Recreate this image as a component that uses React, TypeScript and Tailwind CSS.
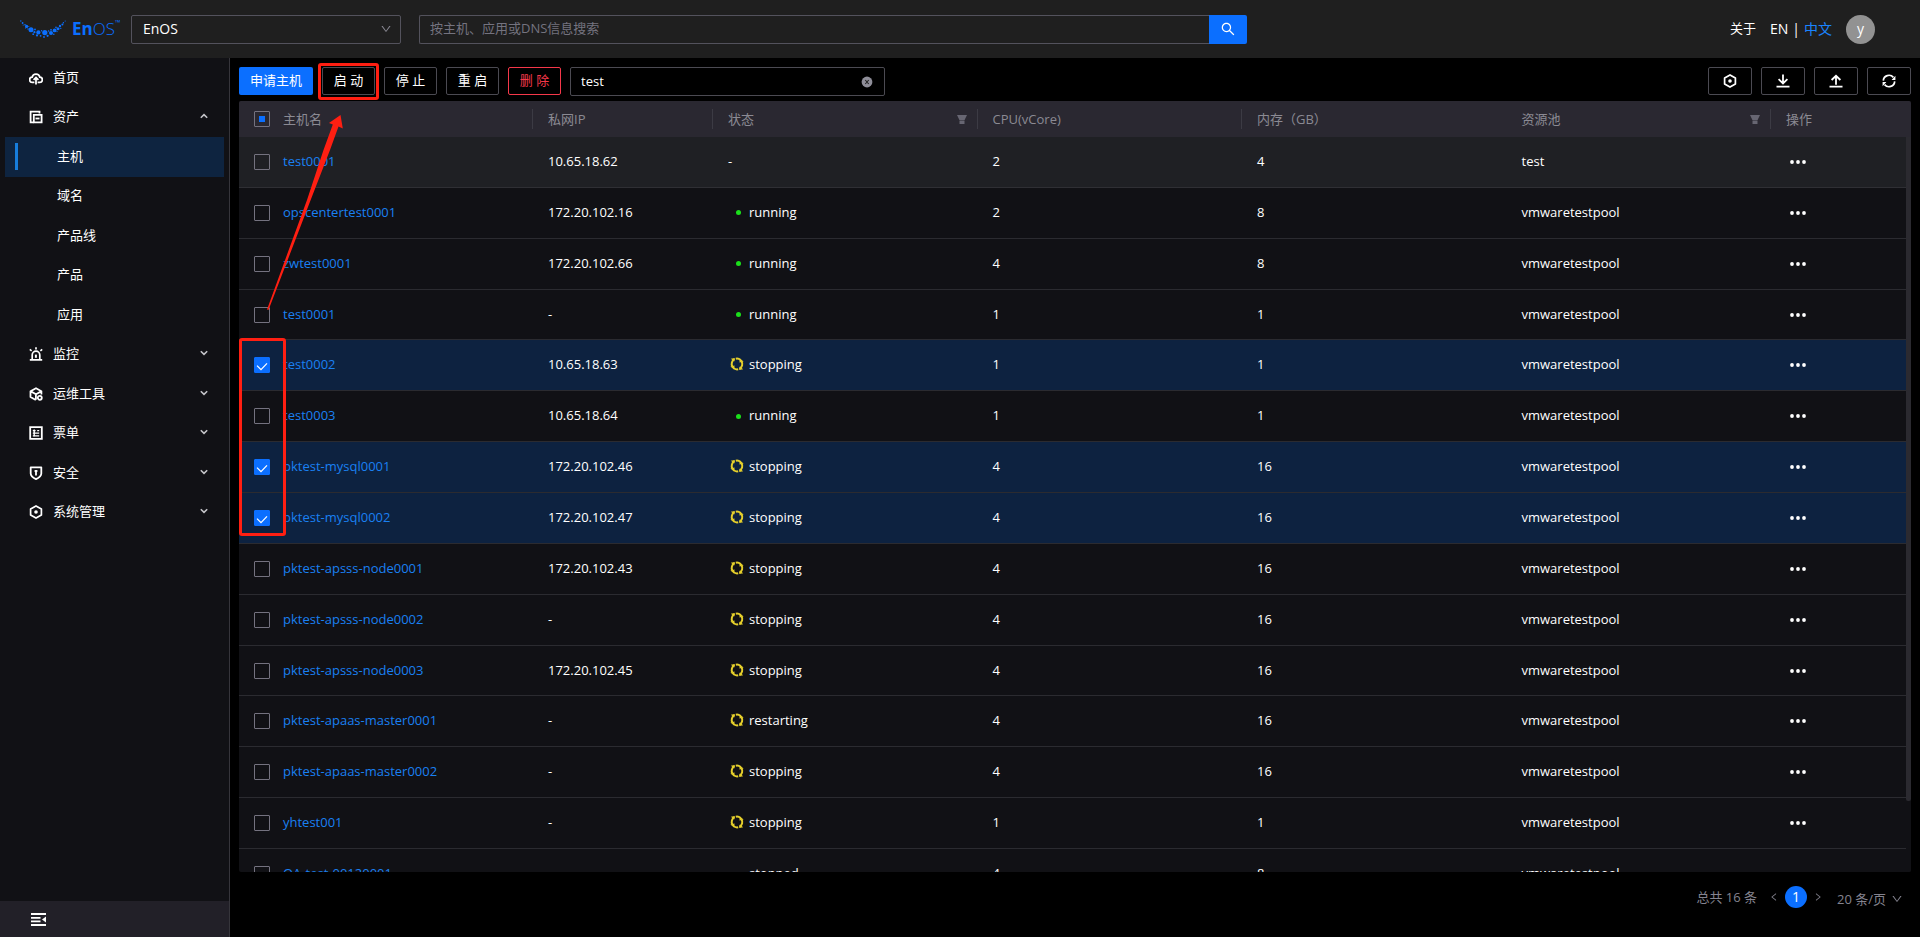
import React, { useState } from "react";
import { AiOutlineDown, AiOutlineLeft, AiOutlineRight, AiOutlineSearch } from "react-icons/ai";

type Host = {
  name: string;
  ip: string;
  status: string;
  cpu: number;
  memory: number;
  pool: string;
};

const HOSTS: Host[] = [
  { name: "test0001", ip: "10.65.18.62", status: "-", cpu: 2, memory: 4, pool: "test" },
  { name: "opscentertest0001", ip: "172.20.102.16", status: "running", cpu: 2, memory: 8, pool: "vmwaretestpool" },
  { name: "zwtest0001", ip: "172.20.102.66", status: "running", cpu: 4, memory: 8, pool: "vmwaretestpool" },
  { name: "test0001", ip: "-", status: "running", cpu: 1, memory: 1, pool: "vmwaretestpool" },
  { name: "test0002", ip: "10.65.18.63", status: "stopping", cpu: 1, memory: 1, pool: "vmwaretestpool" },
  { name: "test0003", ip: "10.65.18.64", status: "running", cpu: 1, memory: 1, pool: "vmwaretestpool" },
  { name: "pktest-mysql0001", ip: "172.20.102.46", status: "stopping", cpu: 4, memory: 16, pool: "vmwaretestpool" },
  { name: "pktest-mysql0002", ip: "172.20.102.47", status: "stopping", cpu: 4, memory: 16, pool: "vmwaretestpool" },
  { name: "pktest-apsss-node0001", ip: "172.20.102.43", status: "stopping", cpu: 4, memory: 16, pool: "vmwaretestpool" },
  { name: "pktest-apsss-node0002", ip: "-", status: "stopping", cpu: 4, memory: 16, pool: "vmwaretestpool" },
  { name: "pktest-apsss-node0003", ip: "172.20.102.45", status: "stopping", cpu: 4, memory: 16, pool: "vmwaretestpool" },
  { name: "pktest-apaas-master0001", ip: "-", status: "restarting", cpu: 4, memory: 16, pool: "vmwaretestpool" },
  { name: "pktest-apaas-master0002", ip: "-", status: "stopping", cpu: 4, memory: 16, pool: "vmwaretestpool" },
  { name: "yhtest001", ip: "-", status: "stopping", cpu: 1, memory: 1, pool: "vmwaretestpool" },
  { name: "QA-test-00120001", ip: "-", status: "stopped", cpu: 4, memory: 8, pool: "vmwaretestpool" },
];

const HexIcon = () => (
  <svg viewBox="0 0 14 14" className="size-3.5" fill="none" stroke="currentColor" strokeWidth="1.7">
    <path d="M7 .9 12.4 3.9v6.2L7 13.1 1.6 10.1V3.9Z" strokeLinejoin="round" />
    <circle cx="7" cy="7" r="1.8" fill="currentColor" stroke="none" />
  </svg>
);

const HomeIcon = () => (
  <svg viewBox="0 0 14 14" className="size-3.5" fill="none" stroke="currentColor" strokeWidth="1.8">
    <path d="M5.4 11.4H3.4a2.6 2.6 0 0 1-.3-5.2 4 4 0 0 1 7.8 0 2.6 2.6 0 0 1-.3 5.2H8.6M7 13.4V6.6M4.6 8.8 7 6.4l2.4 2.4" />
  </svg>
);

const AssetIcon = () => (
  <svg viewBox="0 0 14 14" className="size-3.5" fill="none" stroke="currentColor" strokeWidth="1.8">
    <path d="M10.5 3.5V1.6H1.6v10.8h3" />
    <path d="M4.8 4.8h7.8v7.6H4.8Z" />
    <path d="M6.5 8.5h4" />
  </svg>
);

const AlarmIcon = () => (
  <svg viewBox="0 0 14 14" className="size-3.5" fill="none" stroke="currentColor" strokeWidth="1.7">
    <path d="M.8 12.8h12.4M3.2 12.4V8a3.8 3.8 0 0 1 7.6 0v4.4M7 .2v2.4M.8 2.4l1.8 1.4M13.2 2.4l-1.8 1.4" />
    <path d="M6.9 7.6v3.2" strokeWidth="2" />
  </svg>
);

const ToolIcon = () => (
  <svg viewBox="0 0 14 14" className="size-3.5" fill="none" stroke="currentColor" strokeWidth="1.8">
    <path d="M6.8 13 1.5 10V4.2L7 1.2l5.4 3v3.2M1.8 4.4 7 7.2l5.2-2.8M6.9 7.2v5.6" strokeLinejoin="round" />
    <circle cx="10.8" cy="10.8" r="2" />
  </svg>
);

const TicketIcon = () => (
  <svg viewBox="0 0 14 14" className="size-3.5" fill="none" stroke="currentColor" strokeWidth="1.8">
    <path d="M1.2 1.2h11.6v11.6H1.2Z" />
    <path d="M3.8 4.6h2.8M3.8 7.2h6.4M3.8 9.8h6.4M8.2 4.6h2" strokeWidth="1.3" />
    <path d="M5.2 3.4v6.8" strokeWidth="1.4" />
  </svg>
);

const ShieldIcon = () => (
  <svg viewBox="0 0 14 14" className="size-3.5" fill="none" stroke="currentColor" strokeWidth="1.8">
    <path d="M1.7 1.3h10.6v6.3c0 2.6-2.2 4.2-5.3 5.5-3.1-1.3-5.3-2.9-5.3-5.5Z" strokeLinejoin="round" />
    <path d="M7 4v5.4M5.6 5h2.8" />
  </svg>
);

const SyncIcon = () => (
  <svg viewBox="0 0 14 14" className="size-3.5" fill="none" stroke="currentColor" strokeWidth="1.7">
    <path d="M1.3 6.6A5.7 5.7 0 0 1 11.4 3.4M12.7 7.4A5.7 5.7 0 0 1 2.6 10.6" />
    <path d="M13.4 1.8v4.2H9.6ZM.6 12.2V8h3.8Z" fill="currentColor" stroke="none" />
  </svg>
);

const SpinRing = () => (
  <svg viewBox="0 0 14 14" className="size-3.5" fill="none" stroke="#e6d02c" strokeWidth="2">
    <path d="M4.6 2.2A5.3 5.3 0 0 0 2.4 9.6M9.4 11.8a5.3 5.3 0 0 0 2.2-7.4M5.8 1.7a5.3 5.3 0 0 1 4.8 1.4M8.2 12.3a5.3 5.3 0 0 1-4.8-1.4" />
    <path d="M.4 9.4 4.6 8.6 4 12.4ZM13.6 4.6 9.4 5.4 10 1.6ZM.8 1.8 4.8 1l-.6 3.4ZM13.2 12.2l-4 .8.6-3.4Z" fill="#e6d02c" stroke="none" />
  </svg>
);

const DownloadIcon = () => (
  <svg viewBox="0 0 14 14" className="size-3.5" fill="none" stroke="currentColor" strokeWidth="1.8">
    <path d="M.5 12.6h13M7 .6v8.4M2.6 5.2 7 9.4l4.4-4.2" />
  </svg>
);

const UploadIcon = () => (
  <svg viewBox="0 0 14 14" className="size-3.5" fill="none" stroke="currentColor" strokeWidth="1.8">
    <path d="M.5 12.6h13M7 10.8V2M2.6 6 7 1.8 11.4 6" />
  </svg>
);

const Caret = ({ up = false }: { up?: boolean }) => (
  <svg viewBox="0 0 8 6" className="h-1.5 w-2" fill="none" stroke="#c4c4c8" strokeWidth="1.6">
    <path d={up ? "M.8 4.8 4 1.6l3.2 3.2" : "M.8 1.2 4 4.4l3.2-3.2"} />
  </svg>
);

const FilterIcon = () => (
  <svg viewBox="0 0 10 9" className="h-[9px] w-2.5" fill="#676672">
    <path d="M0 0h10L7.6 5H2.4ZM2.5 5.6h5V9h-5Z" />
  </svg>
);

const LOGO_DOTS: [number, number, number][] = [
  [0.8, 1, 0.7], [2.6, 3, 0.9], [3.2, 5, 0.6], [5, 4.8, 0.8], [6.6, 6.4, 1.6], [5.6, 8, 0.6], [8, 9, 0.7],
  [11, 9.8, 2.5], [8.8, 6.4, 0.5], [14.4, 12.2, 1.1], [15, 9.4, 0.9], [13.2, 14.2, 0.9], [18.4, 12.4, 2.1],
  [17, 15.4, 1.1], [20.6, 15.8, 0.9], [21.6, 10.8, 0.7], [24.8, 12.6, 2.6], [24, 17, 0.9], [27.6, 15.8, 1.1],
  [28.6, 11, 0.8], [31, 13, 2], [31, 9.8, 0.9], [34.6, 10.4, 1.9], [33.8, 14.2, 0.8], [36, 7.4, 0.8],
  [38, 8.8, 1.5], [37, 11.6, 0.7], [40, 6, 1.2], [40.8, 8.4, 0.6], [42.4, 4.6, 1], [43.4, 2.8, 0.7], [45.2, 1, 0.6],
];

const MENU = [
  { label: "首页", icon: HomeIcon },
  { label: "资产", icon: AssetIcon, open: true, children: ["主机", "域名", "产品线", "产品", "应用"] },
  { label: "监控", icon: AlarmIcon, open: false },
  { label: "运维工具", icon: ToolIcon, open: false },
  { label: "票单", icon: TicketIcon, open: false },
  { label: "安全", icon: ShieldIcon, open: false },
  { label: "系统管理", icon: HexIcon, open: false },
];

function Header() {
  return (
    <header className="flex h-[58px] shrink-0 items-center bg-[#1f1f1f] pr-[45px] pl-5">
      <a href="#home" className="flex w-[111px] items-center text-[#0b6fff]">
        <svg viewBox="0 0 46 18" className="h-[18px] w-[46px]" fill="currentColor">
          {LOGO_DOTS.map(([x, y, r]) => (
            <circle key={`${x}-${y}`} cx={x} cy={y} r={r} />
          ))}
        </svg>
        <span className="ml-1.5 flex text-[17px] leading-6">
          <span className="font-bold">En</span>
          <span className="font-light">OS</span>
          <span className="text-[7px] leading-3">™</span>
        </span>
      </a>
      <div className="grid w-[270px] items-center">
        <select
          aria-label="EnOS"
          className="col-start-1 row-start-1 h-[29px] appearance-none rounded-xs border border-[#53525c] bg-transparent pr-8 pl-[11px] text-sm"
        >
          <option>EnOS</option>
        </select>
        <AiOutlineDown className="pointer-events-none col-start-1 row-start-1 mr-[9px] size-3 justify-self-end text-[#8a8994]" />
      </div>
      <form className="ml-[18px] flex w-[828px]" onSubmit={(e) => e.preventDefault()}>
        <input
          aria-label="按主机、应用或DNS信息搜索"
          placeholder="按主机、应用或DNS信息搜索"
          className="h-[29px] min-w-0 flex-1 rounded-l-xs border border-r-0 border-[#53525c] bg-transparent px-2.5 pb-0.5 outline-none placeholder:text-[#74737f]"
        />
        <button type="submit" className="grid h-[29px] w-[38px] place-items-center rounded-r-xs bg-[#0b6fff]">
          <AiOutlineSearch className="size-4" />
        </button>
      </form>
      <div className="ml-auto flex items-center">
        <a href="#about" className="pb-0.5">关于</a>
        <a href="#en" className="ml-3.5 text-sm">EN</a>
        <span className="mx-1 text-sm">|</span>
        <a href="#zh" className="text-sm text-[#1a84ff]">中文</a>
        <button className="ml-3.5 size-[29px] rounded-full bg-[#929292] text-sm">y</button>
      </div>
    </header>
  );
}

function Sidebar() {
  return (
    <aside className="flex w-[230px] shrink-0 flex-col border-r border-[#36353b] bg-[#111115]">
      <nav className="grid h-[474px] auto-rows-fr px-[5px]">
        {MENU.map((item) => (
          <React.Fragment key={item.label}>
            <a href={`#${item.label}`} className="flex items-center pr-4 pl-6">
              <item.icon />
              <span className="ml-2.5 pb-0.5">{item.label}</span>
              {item.open !== undefined && (
                <span className="ml-auto pb-0.5">
                  <Caret up={item.open} />
                </span>
              )}
            </a>
            {item.children?.map((child) => (
              <a
                key={child}
                href={`#${child}`}
                className={
                  child === "主机"
                    ? "flex items-center bg-[#0e2440] pl-2.5"
                    : "flex items-center pl-2.5"
                }
              >
                <span className={child === "主机" ? "h-[27px] w-[3px] bg-[#177ddc]" : "h-[27px] w-[3px]"} />
                <span className="ml-[39px] pb-0.5">{child}</span>
              </a>
            ))}
          </React.Fragment>
        ))}
      </nav>
      <button aria-label="收起" className="mt-auto flex h-9 items-center bg-[#222028] pl-[31px]">
        <svg viewBox="0 0 15 13" className="h-[13px] w-[15px]" fill="#fff">
          <path d="M0 0h15v2H0ZM0 4h9.5v1.8H0ZM0 7.4h9.5v1.8H0ZM0 11h15v2H0ZM15 3.4v6.2L11 6.5Z" />
        </svg>
      </button>
    </aside>
  );
}

function Checkbox({
  label,
  checked,
  partial = false,
  onChange,
}: {
  label: string;
  checked: boolean;
  partial?: boolean;
  onChange: () => void;
}) {
  return (
    <span className="ml-[15px] grid size-4 place-items-center">
      <input
        type="checkbox"
        aria-label={label}
        checked={checked}
        onChange={onChange}
        className="col-start-1 row-start-1 size-4 appearance-none rounded-[1px] border border-[#74727f] checked:border-[#0b6fff] checked:bg-[#0b6fff]"
      />
      {checked && (
        <svg viewBox="0 0 16 16" className="pointer-events-none col-start-1 row-start-1 size-4" fill="none" stroke="#fff" strokeWidth="1.3">
          <path d="m3 8.6 4 4 6-6.2" />
        </svg>
      )}
      {partial && <span className="pointer-events-none col-start-1 row-start-1 size-1.5 bg-[#0b6fff]" />}
    </span>
  );
}

const TOOL_BUTTON = "h-7 w-[53px] rounded-xs border border-[#4b4a52] pb-0.5";
const ICON_BUTTON = "grid h-7 w-11 place-items-center rounded-xs border border-[#4b4a52]";

function Toolbar() {
  return (
    <div className="flex h-[43px] items-start gap-[9px] pt-[9px]">
      <button className="h-7 w-[74px] rounded-xs bg-[#0b6fff] pb-0.5">申请主机</button>
      <button className={TOOL_BUTTON}>启 动</button>
      <button className={TOOL_BUTTON}>停 止</button>
      <button className={TOOL_BUTTON}>重 启</button>
      <button className="h-7 w-[53px] rounded-xs border border-[#f5384a] pb-0.5 text-[#f5384a]">删 除</button>
      <div className="grid w-[315px] items-center">
        <input
          aria-label="test"
          defaultValue="test"
          className="col-start-1 row-start-1 h-[29px] w-full rounded-xs border border-[#4b4a52] bg-transparent pr-8 pb-0.5 pl-2.5 text-[13px] outline-none"
        />
        <svg viewBox="0 0 12 12" className="col-start-1 row-start-1 mr-3 size-3 justify-self-end">
          <circle cx="6" cy="6" r="5.4" fill="#8f8e99" />
          <path d="m4.3 4 3.4 4m0-4L4.3 8" stroke="#222" strokeWidth="1.1" />
        </svg>
      </div>
      <div className="ml-auto flex gap-[9px]">
        <button aria-label="设置" className={ICON_BUTTON}><HexIcon /></button>
        <button aria-label="下载" className={ICON_BUTTON}><DownloadIcon /></button>
        <button aria-label="上传" className={ICON_BUTTON}><UploadIcon /></button>
        <button aria-label="刷新" className={ICON_BUTTON}><SyncIcon /></button>
      </div>
    </div>
  );
}

function HeadCell({ label, divider = true, filter = false }: { label: string; divider?: boolean; filter?: boolean }) {
  return (
    <th className="p-0 font-normal">
      <div
        className={
          divider
            ? "flex h-5 items-center justify-between border-r border-[#3c3b44] pr-2.5 pl-[15px]"
            : "flex h-5 items-center justify-between pr-2.5 pl-[15px]"
        }
      >
        {label}
        {filter && <FilterIcon />}
      </div>
    </th>
  );
}

function StatusCell({ status }: { status: string }) {
  if (status === "-") return <>-</>;
  return (
    <span className="flex items-center gap-[3px]">
      <span className="grid w-[18px] place-items-center">
        {status === "running" && <span className="mt-0.5 ml-0.5 size-[5px] rounded-full bg-[#1be01b]" />}
        {(status === "stopping" || status === "restarting") && <SpinRing />}
      </span>
      {status}
    </span>
  );
}

function HostTable() {
  const [selected, setSelected] = useState<number[]>([4, 6, 7]);
  const toggle = (i: number) =>
    setSelected((s) => (s.includes(i) ? s.filter((n) => n !== i) : [...s, i]));

  return (
    <div className="relative min-h-0 flex-1 overflow-hidden rounded-xs bg-[#111115]">
      <table className="h-[799px] w-full table-fixed border-separate border-spacing-0 text-left">
        <colgroup>
          <col className="w-11" />
          <col className="w-[250px]" />
          <col className="w-[180px]" />
          <col />
          <col />
          <col />
          <col />
          <col className="w-[140px]" />
        </colgroup>
        <thead className="bg-[#2a2831] text-[#8b8a93]">
          <tr className="h-9">
            <th className="p-0">
              <Checkbox label="主机名" checked={false} partial={selected.length > 0} onChange={() => setSelected([])} />
            </th>
            <th className="p-0 font-normal">
              <div className="h-5 border-r border-[#3c3b44] leading-5">主机名</div>
            </th>
            <HeadCell label="私网IP" />
            <HeadCell label="状态" filter />
            <HeadCell label="CPU(vCore)" />
            <HeadCell label="内存（GB）" divider={false} />
            <HeadCell label="资源池" filter />
            <HeadCell label="操作" divider={false} />
          </tr>
        </thead>
        <tbody>
          {HOSTS.map((host, i) => (
            <tr
              key={i}
              className={
                selected.includes(i)
                  ? "bg-[#0d2240] [&>td]:border-b [&>td]:border-[#2b2b30] [&>td]:p-0 [&>td]:pb-0.5 [&>td]:pl-[15px]"
                  : i === 0
                    ? "bg-[#1f2024] [&>td]:border-b [&>td]:border-[#2f2f34] [&>td]:p-0 [&>td]:pb-0.5 [&>td]:pl-[15px]"
                    : "[&>td]:border-b [&>td]:border-[#2b2b30] [&>td]:p-0 [&>td]:pb-0.5 [&>td]:pl-[15px]"
              }
            >
              <td className="pb-0! pl-0!">
                <Checkbox label={host.name} checked={selected.includes(i)} onChange={() => toggle(i)} />
              </td>
              <td className="pl-0!">
                <a href={`#${host.name}`} className="text-[#1a80f2]">{host.name}</a>
              </td>
              <td className="font-medium">{host.ip}</td>
              <td className="font-medium"><StatusCell status={host.status} /></td>
              <td className="font-medium">{host.cpu}</td>
              <td className="font-medium">{host.memory}</td>
              <td className="font-medium">{host.pool}</td>
              <td className="pb-0!">
                <button aria-label="更多" className="ml-1 block">
                  <svg viewBox="0 0 16 4" className="h-1 w-4" fill="#fff">
                    <circle cx="2" cy="2" r="1.9" />
                    <circle cx="8" cy="2" r="1.9" />
                    <circle cx="14" cy="2" r="1.9" />
                  </svg>
                </button>
              </td>
            </tr>
          ))}
        </tbody>
      </table>
      <div className="absolute top-9 right-0 bottom-0 w-[5px] bg-[#111115]">
        <div className="h-[664px] rounded-b-xs bg-[#2b2a30]" />
      </div>
    </div>
  );
}

function Pagination() {
  return (
    <footer className="flex h-[65px] items-start pt-3.5 pr-2 text-[#84838f]">
      <div className="ml-auto flex h-[22px] items-center">
        <span>总共 16 条</span>
        <button aria-label="上一页" className="ml-3"><AiOutlineLeft className="size-2.5" /></button>
        <button className="mx-1.5 size-[22px] rounded-full bg-[#0b6fff] text-sm leading-[22px] text-white">1</button>
        <button aria-label="下一页"><AiOutlineRight className="size-2.5" /></button>
        <div className="ml-3.5 grid w-[66px] items-center pt-1">
          <select aria-label="20 条/页" className="col-start-1 row-start-1 appearance-none bg-transparent">
            <option>20 条/页</option>
          </select>
          <AiOutlineDown className="pointer-events-none col-start-1 row-start-1 size-3 justify-self-end" />
        </div>
      </div>
    </footer>
  );
}

function Annotations() {
  return (
    <svg
      viewBox="0 0 400 560"
      className="pointer-events-none absolute top-0 left-0 h-[560px] w-[400px]"
      fill="none"
      stroke="#ff1f12"
      strokeWidth="3"
    >
      <rect x="319.5" y="64.5" width="58" height="34" rx="1.5" />
      <rect x="240.5" y="339.5" width="44" height="195" rx="1.5" />
      <path
        d="M267 309.5 307 200 323.5 150 332.8 124.5 329 123 340.5 115 342.8 128.5 338.5 126.5 330 150 309.5 203 268.5 310Z"
        fill="#ff1f12"
        stroke="none"
      />
    </svg>
  );
}

export default function App() {
  return (
    <div className="relative flex h-screen flex-col overflow-hidden bg-black font-['Open_Sans','Noto_Sans_CJK_SC',sans-serif] text-[13px] leading-5 text-white">
      <Header />
      <div className="flex min-h-0 flex-1">
        <Sidebar />
        <main className="flex min-w-0 flex-1 flex-col px-[9px]">
          <Toolbar />
          <HostTable />
          <Pagination />
        </main>
      </div>
      <Annotations />
    </div>
  );
}
